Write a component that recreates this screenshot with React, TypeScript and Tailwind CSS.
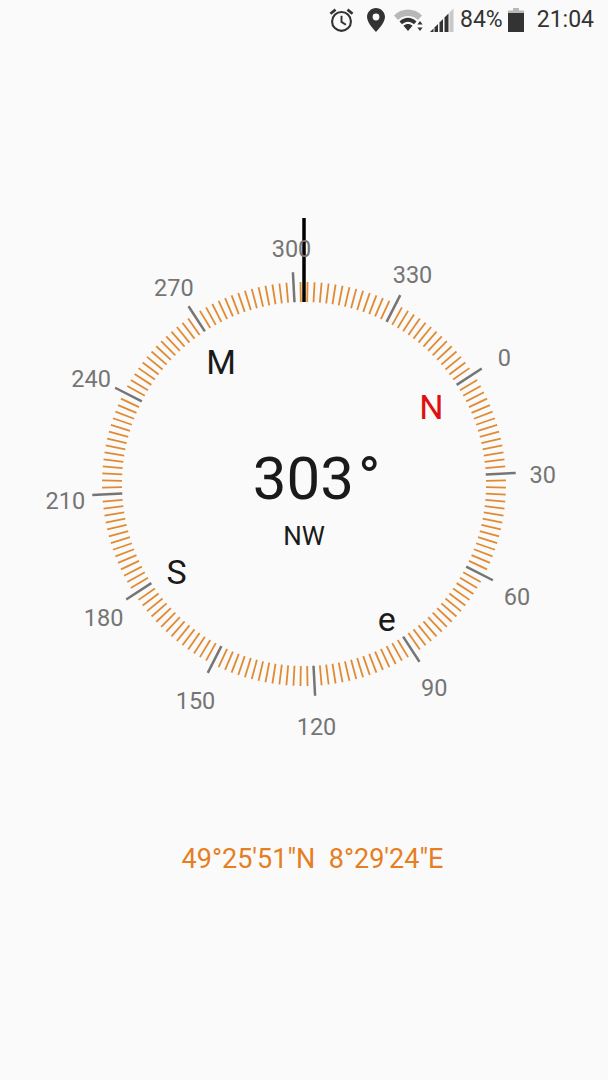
import React from 'react';

const HEADING = 303;
const CX = 304;
const CY = 444;

const polar = (deg: number, r: number, cy = CY) => {
  const a = ((deg - HEADING) * Math.PI) / 180;
  return { x: CX + r * Math.sin(a), y: cy - r * Math.cos(a) };
};

const degrees = Array.from({ length: 180 }, (_, i) => i * 2);
const labels = [0, 30, 60, 90, 120, 150, 180, 210, 240, 270, 300, 330];
const cardinals = [
  { text: 'N', deg: 0, color: 'text-[#e01010]', dy: 0 },
  { text: 'e', deg: 90, color: 'text-[#1a1a1a]', dy: 2 },
  { text: 'S', deg: 180, color: 'text-[#1a1a1a]', dy: 0 },
  { text: 'M', deg: 270, color: 'text-[#1a1a1a]', dy: 0 },
];

function AlarmIcon() {
  return (
    <svg width="25" height="26" viewBox="0 0 26 26" fill="none" stroke="#333" strokeWidth="2.2">
      <circle cx="13" cy="14.5" r="9.8" />
      <path d="M13 8.500V15l4.600 3" strokeWidth="2" />
      <path d="M1.500 6.500L6.800 2.200M24.500 6.500L19.200 2.200" strokeWidth="2.800" />
    </svg>
  );
}

function PinIcon() {
  return (
    <svg width="18" height="24" viewBox="0 0 18 24">
      <path
        fillRule="evenodd"
        fill="#333"
        d="M9 0C4 0 0 4 0 9c0 6 9 15 9 15s9-9 9-15c0-5-4-9-9-9zm0 5.600a3.400 3.400 0 1 1 0 6.800 3.400 3.400 0 0 1 0-6.800z"
      />
    </svg>
  );
}

function WifiIcon() {
  return (
    <svg width="30" height="24" viewBox="0 0 30 24">
      <path d="M0 7.500C7-0.500 21-0.500 28 7.500l-4 4.500C18.500 6.500 9.500 6.500 4 12z" fill="#b8b8b8" />
      <path d="M5.500 13.500C10.500 8.500 17.500 8.500 22.500 13.500l-2.500 2.800C16.500 12.800 11.500 12.800 8 16.300z" fill="#333" />
      <path d="M9.500 17.800C12 15.400 16 15.400 18.500 17.800L14 23z" fill="#333" />
      <path d="M26 13l2.600 3.600h-5.200zM26 23l-2.600-3.600h5.200z" fill="#333" />
    </svg>
  );
}

function SignalIcon() {
  return (
    <svg width="24" height="24" viewBox="0 0 24 24">
      <path d="M19.500 4.500L23.500 0.500V24h-4z" fill="#c8c8c8" />
      <path d="M0 24l3.500-3.500V24z" fill="#333" />
      <path d="M4.500 19.500l3.500-3.500v8H4.500z" fill="#333" />
      <path d="M9.500 14.500l3.500-3.500v13H9.500z" fill="#333" />
      <path d="M14.500 9.500l4-4V24h-4z" fill="#333" />
    </svg>
  );
}

function BatteryIcon() {
  return (
    <svg width="16" height="24" viewBox="0 0 16 24">
      <rect x="5" y="0" width="6" height="3" fill="#b8b8b8" />
      <rect x="0" y="2.500" width="16" height="2.500" fill="#b8b8b8" />
      <rect x="0" y="5" width="16" height="19" fill="#333" />
    </svg>
  );
}

export default function App() {
  return (
    <div className="min-h-[1080px] w-[608px] bg-[#fafafa] font-['Roboto',sans-serif] overflow-hidden">
      <div className="h-[40px] flex items-center justify-end pr-[14px] text-[23px] text-[#333]">
        <div className="flex items-center">
          <AlarmIcon />
          <div className="ml-[13px]"><PinIcon /></div>
          <div className="ml-[9px]"><WifiIcon /></div>
          <div className="ml-[6px]"><SignalIcon /></div>
          <span className="ml-[6px]">84%</span>
          <div className="ml-[5px]"><BatteryIcon /></div>
          <span className="ml-[13px]">21:04</span>
        </div>
      </div>

      <div className="relative h-[760px]">
        <svg className="absolute inset-0" width="608" height="760" viewBox="0 0 608 760">
          {degrees.map((d) => {
            const major = d % 30 === 0;
            const a = polar(d, 182);
            const b = polar(d, major ? 212 : 202);
            return (
              <line
                key={d}
                x1={a.x}
                y1={a.y}
                x2={b.x}
                y2={b.y}
                stroke={major ? '#757575' : '#e08b33'}
                strokeWidth={major ? 2.5 : 1.8}
              />
            );
          })}
          <line x1="304" y1="178" x2="304" y2="262" stroke="#000" strokeWidth="3.5" />
        </svg>

        {labels.map((d) => {
          const p = polar(d, 239, CY + 5);
          return (
            <span
              key={d}
              className="absolute -translate-x-1/2 -translate-y-1/2 text-[23.5px] leading-none text-[#757575]"
              style={{ left: p.x, top: p.y }}
            >
              {d}
            </span>
          );
        })}

        {cardinals.map((c) => {
          const p = polar(c.deg, 152, CY + 5.5);
          return (
            <span
              key={c.text}
              className={`absolute -translate-x-1/2 -translate-y-1/2 text-[34px] leading-none ${c.color}`}
              style={{ left: p.x, top: p.y + c.dy }}
            >
              {c.text}
            </span>
          );
        })}

        <div className="absolute left-0 right-0 top-[401px] flex flex-col items-center text-[#1a1a1a]">
          <span className="text-[60px] leading-[76px] pl-[25px]">
            303<span className="ml-[4px]">°</span>
          </span>
          <span className="text-[26px] leading-[30px] mt-[4px]">NW</span>
        </div>
      </div>

      <div className="mt-[42px] pl-[17px] text-center text-[27px] leading-[34px] text-[#e67e22] whitespace-pre">
        {'49°25\'51"N  8°29\'24"E'}
      </div>
    </div>
  );
}
